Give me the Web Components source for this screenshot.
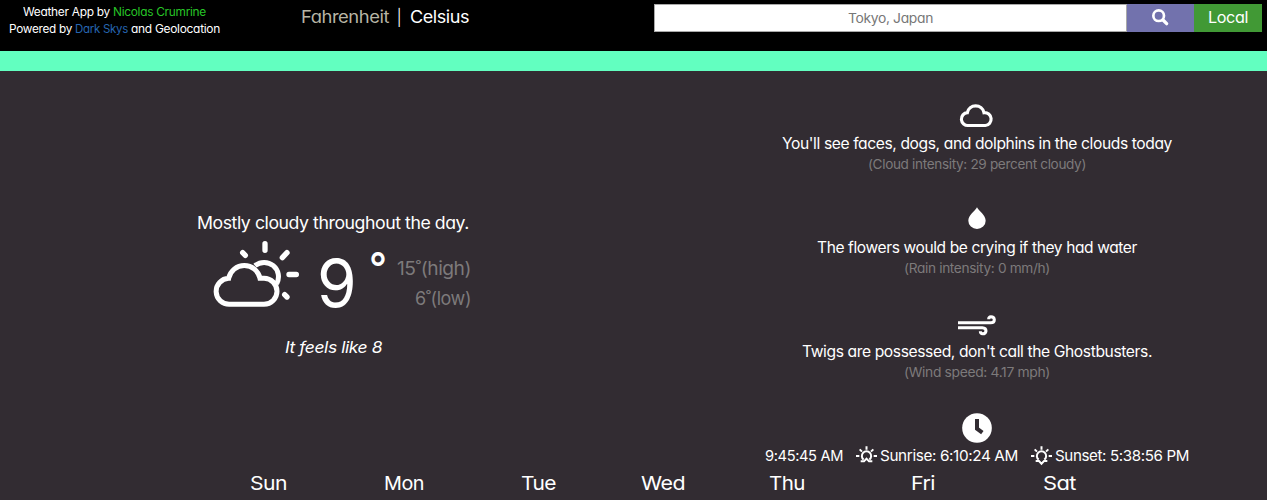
<!DOCTYPE html>
<html lang="en"><head><meta charset="utf-8"><title>Weather App</title>
<style>
html,body{margin:0;height:100%;overflow:hidden;background:#322c32}
body{font-family:Inter,"Liberation Sans",sans-serif;font-feature-settings:"cv11" 1;color:#fff}
</style></head><body>
<weather-app></weather-app>
<script>
/* <fit-text w size lh>: one line of tightly tracked text widened to an exact width */
class FitText extends HTMLElement{
  connectedCallback(){
    const w=+this.getAttribute('w'),s=+this.getAttribute('size'),lh=this.getAttribute('lh')||20;
    const r=this.attachShadow({mode:'open'});
    r.innerHTML=`<style>:host{display:block;flex:none;width:${w}px;height:${lh}px;line-height:${lh}px;font-size:${s}px;white-space:nowrap}span{display:inline-block;letter-spacing:-.025em;transform-origin:0 50%}</style><span><slot></slot></span>`;
    const sp=r.querySelector('span');
    sp.style.transform=`scaleX(${w/sp.getBoundingClientRect().width})`;
  }
}
const ICONS={
 partly:['72 105 255 201',85,67,`<g stroke-width="15"><path d="M119 298A39 39 0 0 1 116 220A48 48 0 0 1 210 220H222A39 39 0 0 1 222 298Z"/><path d="M195 182A43 43 0 0 1 260 236"/></g><g stroke-width="16" stroke-linecap="round"><path d="M225 116V136M158 143L166 151M291 143L277 158M297 208.500H319M284 269L291 276"/></g>`],
 cloud:['570 41 102 69',34,23,`<path stroke-width="9.500" d="M595 105.500A19 19 0 0 1 592 67A25.500 25.500 0 0 1 642 67A19 19 0 0 1 646 105.500Z"/>`],
 drop:['533 36 54 66',18,22,`<path fill="currentColor" stroke="none" d="M560 37C566 48 586 61 586 77A26 25 0 0 1 534 77C534 61 554 48 560 37Z"/>`],
 wind:['504 29 114 61',38,20.33,`<g stroke-width="9"><path d="M504 52.500H602Q613 52 613 43Q612 34.500 603 34.500Q596 35 596 42"/><path d="M504 67.500H577Q588 68 588 77Q587 85.500 578 85.500Q571 85 571 78"/></g>`],
 clock:['366 24 90 90',30,30,`<circle cx="411" cy="69" r="44.500" fill="currentColor" stroke="none"/><path stroke="#322c32" stroke-width="12" d="M411 42V71L427 83"/>`],
 sunrise:['48 120 63 51',21,17,`<g stroke-width="6"><path d="M48 150H58M101 150H111M79.500 121V131M59 130L66 137M100 130L93 137M71 161A14 14 0 1 1 88 161"/><path d="M62 166H72L79.500 158L87 166H97"/></g>`],
 sunset:['48 120 63 57',21,19,`<g stroke-width="6"><path d="M48 150H58M101 150H111M79.500 121V131M59 130L66 137M100 130L93 137M71 161A14 14 0 1 1 88 161"/><path d="M62 165H72L79.500 173L87 165H97"/></g>`],
 search:['155 26 49 49',16.33,16.33,`<circle cx="175" cy="46" r="16" stroke-width="8"/><path stroke-width="10" stroke-linecap="round" d="M188 59L199 70"/>`]
};
class WeatherIcon extends HTMLElement{
  connectedCallback(){
    const [vb,w,h,g]=ICONS[this.getAttribute('name')];
    this.attachShadow({mode:'open'}).innerHTML=`<style>:host{display:block;flex:none;width:${w}px;height:${h}px}svg{display:block;overflow:visible}</style><svg width="${w}" height="${h}" viewBox="${vb}" fill="none" stroke="currentColor">${g}</svg>`;
  }
}
class AppHeader extends HTMLElement{
  connectedCallback(){
    this.attachShadow({mode:'open'}).innerHTML=`<style>
:host{display:flex;box-sizing:border-box;height:71px;background:#000;border-bottom:20px solid #62ffc0;align-items:flex-start}
.l{width:211px;margin-left:9px;padding-top:4px;display:flex;flex-direction:column;align-items:center}
.r{display:flex}
.u{margin-left:81px;padding-top:7px}
.search{margin-left:185px;padding-top:4px}
.in{box-sizing:border-box;width:473px;height:28px;border:1px solid #a9a9a9;background:#fff;color:#777;display:flex;justify-content:center;padding-top:3px}
.b{width:67px;height:28px;background:#7272ad;display:flex;justify-content:center;align-items:center}
.b weather-icon{margin-top:-2px}
.g{width:68px;height:28px;background:#419935;display:flex;justify-content:center;align-items:center}
.link{color:#27c427}.sky{color:#2665b0}
</style><div class="l"><div class="r"><fit-text w="90" size="11.5" lh="17">Weather App by&nbsp;</fit-text><fit-text class="link" w="93" size="11.5" lh="17">Nicolas Crumrine</fit-text></div>
<div class="r"><fit-text w="66" size="11.5" lh="17">Powered by&nbsp;</fit-text><fit-text class="sky" w="56" size="11.5" lh="17">Dark Skys&nbsp;</fit-text><fit-text w="89" size="11.5" lh="17">and Geolocation</fit-text></div></div>
<div class="r u"><fit-text style="color:#b8b5a5" w="88" size="17">Fahrenheit</fit-text><fit-text w="4" size="16" style="margin:0 9px 0 8px">|</fit-text><fit-text w="59" size="17">Celsius</fit-text></div>
<div class="r search"><div class="in"><fit-text w="85" size="13.5">Tokyo, Japan</fit-text></div><div class="b"><weather-icon name="search"></weather-icon></div><div class="g"><fit-text w="40" size="15.5">Local</fit-text></div></div>`;
  }
}
class CurrentWeather extends HTMLElement{
  connectedCallback(){
    this.attachShadow({mode:'open'}).innerHTML=`<style>
:host{display:flex;flex-direction:column;align-items:center;padding-top:142px;height:257px}
.row{display:flex;align-items:flex-start;width:257px;margin:7px 0 0 18px;height:96px}
.t{margin-left:18px;padding-top:8px}.d{margin-left:14px;padding-top:8px;font-weight:500}
.hl{margin-left:11px;padding-top:18px;width:74px;display:flex;flex-direction:column;align-items:flex-end;gap:10px;color:#7d7a7b}
.f{font-style:italic;margin-top:1px}
</style><fit-text w="272" size="17">Mostly cloudy throughout the day.</fit-text>
<div class="row"><weather-icon name="partly"></weather-icon><fit-text class="t" w="38" size="66" lh="70">9</fit-text><fit-text class="d" w="17" size="42" lh="40">°</fit-text>
<div class="hl"><fit-text w="74" size="18.5">15˚(high)</fit-text><fit-text w="56" size="18.5">6˚(low)</fit-text></div></div>
<fit-text class="f" w="97" size="16.5">It feels like 8</fit-text>`;
  }
}
class ConditionCard extends HTMLElement{
  connectedCallback(){
    const a=n=>this.getAttribute(n);
    this.attachShadow({mode:'open'}).innerHTML=`<style>
:host{display:flex;flex-direction:column;align-items:center;height:104px}
.i{box-sizing:border-box;height:42px;padding-top:${a('top')}px;flex:none}
</style><div class="i"><weather-icon name="${a('icon')}"></weather-icon></div><slot></slot>`;
  }
}
class DayDetails extends HTMLElement{
  connectedCallback(){
    this.attachShadow({mode:'open'}).innerHTML=`<style>:host{display:block;padding-top:21px}
.s{color:#7d7a7b}.r{display:flex;align-items:center;height:20px}
weather-icon{margin-left:13px}weather-icon+fit-text{margin-left:3px}.r weather-icon{height:21px}</style>
<condition-card icon="cloud" top="12"><fit-text w="390" size="15.3">You'll see faces, dogs, and dolphins in the clouds today</fit-text><fit-text class="s" w="218" size="13.3">(Cloud intensity: 29 percent cloudy)</fit-text></condition-card>
<condition-card icon="drop" top="11"><fit-text w="320" size="15.3">The flowers would be crying if they had water</fit-text><fit-text class="s" w="146" size="13.3">(Rain intensity: 0 mm/h)</fit-text></condition-card>
<condition-card icon="wind" top="15"><fit-text w="350" size="15.3">Twigs are possessed, don't call the Ghostbusters.</fit-text><fit-text class="s" w="146" size="13.3">(Wind speed: 4.17 mph)</fit-text></condition-card>
<condition-card icon="clock" top="9"><div class="r"><fit-text w="78" size="15">9:45:45 AM</fit-text><weather-icon name="sunrise"></weather-icon><fit-text w="138" size="15">Sunrise: 6:10:24 AM</fit-text><weather-icon name="sunset"></weather-icon><fit-text w="134" size="15">Sunset: 5:38:56 PM</fit-text></div></condition-card>`;
  }
}
class WeekDays extends HTMLElement{
  connectedCallback(){
    const d=[['Sun',37,250],['Mon',40,97],['Tue',35,97],['Wed',44,85],['Thu',36,84],['Fri',24,106],['Sat',33,108]];
    this.attachShadow({mode:'open'}).innerHTML=`<style>:host{display:flex;padding-top:1px}</style>`+d.map(([t,w,m])=>`<fit-text w="${w}" size="19" lh="26" style="margin-left:${m}px">${t}</fit-text>`).join('');
  }
}
class WeatherApp extends HTMLElement{
  connectedCallback(){
    this.attachShadow({mode:'open'}).innerHTML=`<style>:host{display:block;width:1267px;height:500px;overflow:hidden}
main{display:grid;grid-template-columns:666px 580px;column-gap:21px;height:399px}</style>
<app-header></app-header><main><current-weather></current-weather><day-details></day-details></main><week-days></week-days>`;
  }
}
customElements.define('fit-text',FitText);
customElements.define('weather-icon',WeatherIcon);
customElements.define('app-header',AppHeader);
customElements.define('current-weather',CurrentWeather);
customElements.define('condition-card',ConditionCard);
customElements.define('day-details',DayDetails);
customElements.define('week-days',WeekDays);
customElements.define('weather-app',WeatherApp);
</script></body></html>
